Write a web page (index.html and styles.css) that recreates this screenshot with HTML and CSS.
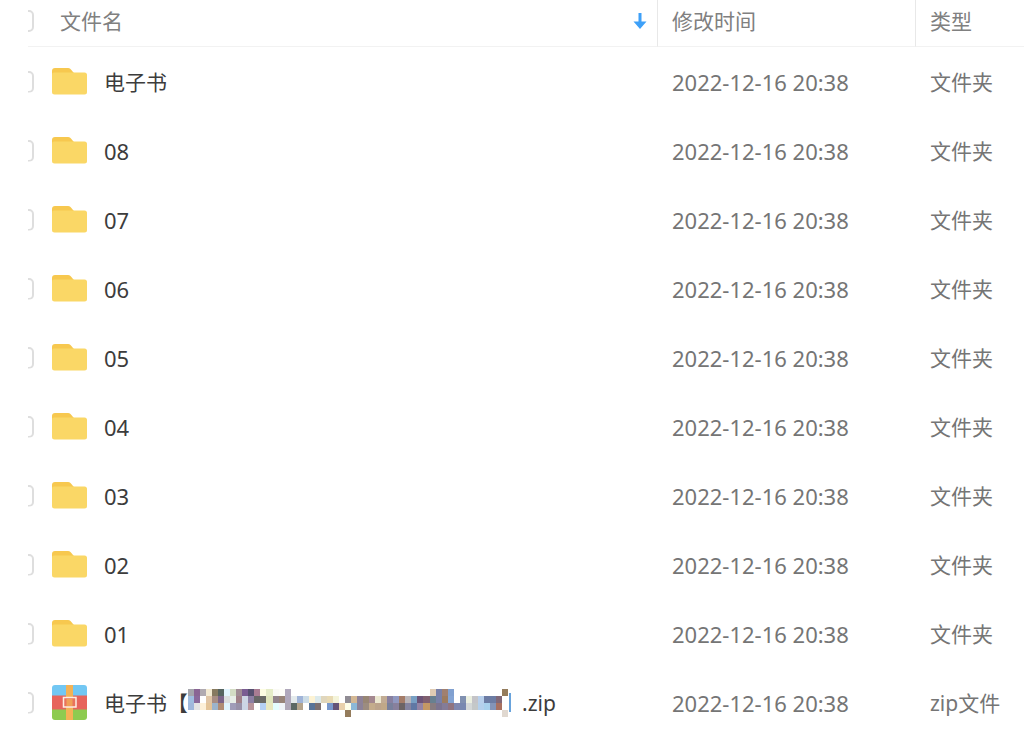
FILE: index.html
```html
<!DOCTYPE html>
<html lang="zh-CN">
<head>
<meta charset="UTF-8">
<meta name="viewport" content="width=device-width, initial-scale=1.0">
<title>文件列表</title>
<link rel="stylesheet" href="styles.css">
</head>
<body>
<!-- Shared icons -->
<svg class="sprite" aria-hidden="true">
    <symbol id="folder" viewBox="0 0 35 35">
        <path fill="#f7c84f" d="M3 4h13q1.500 0 2.500 1l3 3.500V20H0V7q0-3 3-3z"/>
        <path fill="#fad766" d="M0 10.500q0-2 2-2h30.500q2.500 0 2.500 2.500v17q0 2.500-2.500 2.500h-30Q0 30.500 0 28z"/>
    </symbol>
    <symbol id="zip" viewBox="0 0 35 35">
        <path fill="#72c7f3" d="M3 0h29q3 0 3 3v8H0V3q0-3 3-3z"/>
        <path fill="#e7645c" d="M0 10.500h35V25H0z"/>
        <path fill="#8dcb50" d="M0 24.500h35V32q0 3-3 3H3q-3 0-3-3z"/>
        <path fill="#f3b256" d="M14 0h7v35h-7z"/>
        <path fill="#e9735c" stroke="#fdeee2" stroke-width="1.500" d="M11.500 12.500h12.500v9.500H11.500z"/>
        <path fill="#f0a058" d="M14.500 14h6v7h-6z"/>
    </symbol>
</svg>

<table class="file-list">
    <thead>
        <tr>
            <th class="check"><input type="checkbox" aria-label="全选"></th>
            <th class="name">
                <button class="sort" type="button">
                    文件名
                    <svg class="arrow" viewBox="0 0 14 16" aria-hidden="true"><path fill="#3ea0f8" d="M5.500 0h3v8.500h5L7 16 .5 8.500h5z"/></svg>
                </button>
            </th>
            <th class="time">修改时间</th>
            <th class="type">类型</th>
        </tr>
    </thead>
    <tbody>
        <tr>
            <td class="check"><input type="checkbox" aria-label="选择 电子书"></td>
            <td class="name"><div class="file"><svg class="icon"><use href="#folder"/></svg><span>电子书</span></div></td>
            <td class="time">2022-12-16 20:38</td>
            <td class="type">文件夹</td>
        </tr>
        <tr>
            <td class="check"><input type="checkbox" aria-label="选择 08"></td>
            <td class="name"><div class="file"><svg class="icon"><use href="#folder"/></svg><span class="num">08</span></div></td>
            <td class="time">2022-12-16 20:38</td>
            <td class="type">文件夹</td>
        </tr>
        <tr>
            <td class="check"><input type="checkbox" aria-label="选择 07"></td>
            <td class="name"><div class="file"><svg class="icon"><use href="#folder"/></svg><span class="num">07</span></div></td>
            <td class="time">2022-12-16 20:38</td>
            <td class="type">文件夹</td>
        </tr>
        <tr>
            <td class="check"><input type="checkbox" aria-label="选择 06"></td>
            <td class="name"><div class="file"><svg class="icon"><use href="#folder"/></svg><span class="num">06</span></div></td>
            <td class="time">2022-12-16 20:38</td>
            <td class="type">文件夹</td>
        </tr>
        <tr>
            <td class="check"><input type="checkbox" aria-label="选择 05"></td>
            <td class="name"><div class="file"><svg class="icon"><use href="#folder"/></svg><span class="num">05</span></div></td>
            <td class="time">2022-12-16 20:38</td>
            <td class="type">文件夹</td>
        </tr>
        <tr>
            <td class="check"><input type="checkbox" aria-label="选择 04"></td>
            <td class="name"><div class="file"><svg class="icon"><use href="#folder"/></svg><span class="num">04</span></div></td>
            <td class="time">2022-12-16 20:38</td>
            <td class="type">文件夹</td>
        </tr>
        <tr>
            <td class="check"><input type="checkbox" aria-label="选择 03"></td>
            <td class="name"><div class="file"><svg class="icon"><use href="#folder"/></svg><span class="num">03</span></div></td>
            <td class="time">2022-12-16 20:38</td>
            <td class="type">文件夹</td>
        </tr>
        <tr>
            <td class="check"><input type="checkbox" aria-label="选择 02"></td>
            <td class="name"><div class="file"><svg class="icon"><use href="#folder"/></svg><span class="num">02</span></div></td>
            <td class="time">2022-12-16 20:38</td>
            <td class="type">文件夹</td>
        </tr>
        <tr>
            <td class="check"><input type="checkbox" aria-label="选择 01"></td>
            <td class="name"><div class="file"><svg class="icon"><use href="#folder"/></svg><span class="num">01</span></div></td>
            <td class="time">2022-12-16 20:38</td>
            <td class="type">文件夹</td>
        </tr>
        <tr>
            <td class="check"><input type="checkbox" aria-label="选择 zip"></td>
            <td class="name"><div class="file"><svg class="icon"><use href="#zip"/></svg><span>电子书【</span><svg class="mosaic" id="mosaic" viewBox="0 0 53 4" preserveAspectRatio="none" aria-hidden="true"></svg><span class="bracket"></span><span>.zip</span></div></td>
            <td class="time">2022-12-16 20:38</td>
            <td class="type">zip文件</td>
        </tr>
    </tbody>
</table>

<script src="mosaic.js"></script>
</body>
</html>
```

FILE: mosaic.js
```js
// Pixelated part of the file name: [first column, colours] for each row
const rows = [
    [
        [0, 'a5a5ac 8a6594 b0aab0 f3ead2 877a60 566460 e2f4fd d3dcc4 a08c95 7a5c92 565070 a87c93 fdfde2 e5ecc8 fafaf5 fdfdf8 b0a8bc'],
        [40, 'e0ccb4 7880a8 a08070 80a0d0'],
        [52, '947c5c']
    ],
    [
        [0, '9fbddf 8a6a9c ffffff e0c5a5 a88e84 7b6488 dcdede e8eee8 a08088 cdd5e4 8c7ea4 676767 6a6a66 e0e6bc 92848c 988478 b0a8bc e4eaec a0b4d8 ccdce6 fdf3d4 dceaec e0d6bc e8dab4 f4f4da ffffff 908c94 d4b894 8e8298 988674 a48890 ece8d0 c2ac94 8880a0 9098c0 a47c68 b8b4b8 78a0c4 6c5478 806070 688090 7880a8 9c7c60 84a4d4 ffffff 8090b0 ecf0e0 c4c4c8 b8d0ec 6c7ca4 6c7ca4 806878']
    ],
    [
        [0, 'a0b8dc e4e4e4 fdf0d8 e4c498 9cb4cc b08c74 e0f4fd a09cb8 9890a8 ccd4e4 b8949c ffffff b4d0f4 e8e8c0 e4fdfd f0f4f8 b0a8b8 5c6864 b4a48c ffffff 587498 7c7070 ffffff 7898cc 645478 e8d0ac fdfde8 8cb8d8 8c8298 9c8c80 c4ac8c bca48c c0a888 78809c 88809c 6c6464 8484a0 6078a4 9484a4 c49864 887c80 7c7490 847c98 907480 8088b0 7888b0 d4d8d8 c4c8c8 b4d0ec a8d0ec 8494b8 a87060']
    ],
    [
        [26, '947c5c'],
        [52, 'e0d8d0']
    ]
];

const mosaic = document.getElementById('mosaic');
rows.forEach((runs, y) => {
    runs.forEach(([start, colours]) => {
        colours.split(' ').forEach((colour, i) => {
            const rect = document.createElementNS('http://www.w3.org/2000/svg', 'rect');
            rect.setAttribute('x', start + i);
            rect.setAttribute('y', y);
            rect.setAttribute('width', 1);
            rect.setAttribute('height', 1);
            rect.setAttribute('fill', '#' + colour);
            mosaic.appendChild(rect);
        });
    });
});
```

FILE: styles.css
```css
body {
    margin: 0;
    background-color: #fff;
    font-family: "Noto Sans", "Noto Sans CJK SC", sans-serif;
    font-size: 21px;
    line-height: 30px;
    color: #757575;
    overflow: hidden;
}
.sprite {
    display: none;
}
.file-list {
    width: 100%;
    padding-left: 28px;
    border-collapse: separate;
    border-spacing: 0;
    table-layout: fixed;
}
th, td {
    padding: 0;
    text-align: left;
    font-weight: normal;
    white-space: nowrap;
}
th {
    height: 42px;
    padding-bottom: 4px;
    border-bottom: 1px solid #f2f2f2;
    color: #808080;
}
td {
    height: 69px;
}
.check {
    width: 24px;
    overflow: hidden;
}
.check input {
    appearance: none;
    display: block;
    box-sizing: border-box;
    width: 22px;
    height: 22px;
    margin: 0 0 0 -16px;
    border: 2px solid #dedede;
    border-radius: 5px;
    clip-path: inset(0 0 0 16px);
}
.time {
    width: 243px;
    padding-left: 14px;
}
.type {
    width: 94px;
    padding-left: 14px;
}
th.time, th.type {
    border-left: 1px solid #e8e8e8;
}
td.time, td.type {
    padding-left: 15px;
}
td.time, .num {
    font-size: 22px;
}
.sort {
    display: flex;
    align-items: center;
    justify-content: space-between;
    width: 100%;
    padding: 0 10px 0 8px;
    border: none;
    background: none;
    font: inherit;
    color: inherit;
    cursor: pointer;
}
.arrow {
    width: 14px;
    height: 16px;
}
.file {
    display: flex;
    align-items: center;
    color: #3c3c3c;
}
.icon {
    width: 35px;
    height: 35px;
    margin-right: 17px;
}
.mosaic {
    width: 320px;
    height: 28px;
    shape-rendering: crispEdges;
}
.bracket {
    width: 1px;
    height: 19px;
    margin-right: 11px;
    border-right: 2px solid #69a3dc;
}
```
